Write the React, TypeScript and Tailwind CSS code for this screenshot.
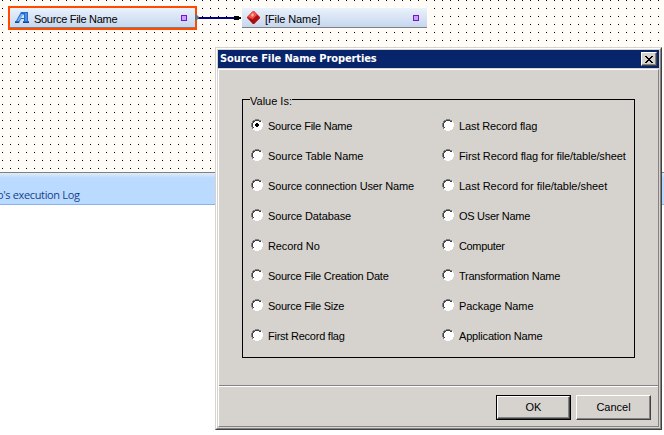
const left = [
  { label: "Source File Name", fit: "tracking-[-0.25px]" },
  { label: "Source Table Name", fit: "tracking-[-0.06px]" },
  { label: "Source connection User Name", fit: "tracking-[-0.14px]" },
  { label: "Source Database", fit: "tracking-[-0.13px]" },
  { label: "Record No", fit: "tracking-[-0.1px]" },
  { label: "Source File Creation Date", fit: "tracking-[-0.24px]" },
  { label: "Source File Size", fit: "tracking-[-0.25px]" },
  { label: "First Record flag", fit: "tracking-[-0.24px]" },
];
const right = [
  { label: "Last Record flag", fit: "tracking-[-0.12px]" },
  { label: "First Record flag for file/table/sheet", fit: "tracking-[-0.1px]" },
  { label: "Last Record for file/table/sheet", fit: "tracking-[-0.03px]" },
  { label: "OS User Name", fit: "tracking-[-0.3px]" },
  { label: "Computer", fit: "tracking-[-0.35px]" },
  { label: "Transformation Name", fit: "tracking-[-0.26px]" },
  { label: "Package Name", fit: "tracking-[-0.06px]" },
  { label: "Application Name", fit: "tracking-[-0.18px]" },
];

function Radio({ checked }: { checked: boolean }) {
  return (
    <svg width="12" height="12" className="shrink-0" shapeRendering="crispEdges">
      <path d="M4 1h4v1h2v2h1v4h-1v2H8v1H4v-1H2V8H1V4h1V2h2z" fill="#fff" />
      <path d="M4 0h4v1H4zM2 1h2v1H2zM8 1h2v1H8zM1 2h1v2H1zM0 4h1v4H0zM1 8h1v2H1z" fill="#808080" />
      <path d="M4 1h4v1H4zM2 2h2v1H2zM8 2h2v1H8zM2 3h1v1H2zM1 4h1v4H1zM2 8h1v1H2z" fill="#404040" />
      <path d="M10 2h1v2h-1zM11 4h1v4h-1zM10 8h1v2h-1zM8 10h2v1H8zM4 11h4v1H4zM2 10h2v1H2z" fill="#fff" />
      {checked && <path d="M5 4h2v1h1v2H7v1H5V7H4V5h1z" fill="#000" />}
    </svg>
  );
}

function Column({ items, selected, width }: { items: typeof left; selected: number; width: string }) {
  return (
    <div className={`flex flex-col ${width}`}>
      {items.map((item, i) => (
        <label key={item.label} className="flex h-[30px] shrink-0 items-start whitespace-nowrap">
          <Radio checked={i === selected} />
          <span className={`ml-[5px] leading-[14px] ${item.fit}`}>{item.label}</span>
        </label>
      ))}
    </div>
  );
}

function Port() {
  return <span className="block size-[6px] border border-[#7a10d8] bg-[#c9a0f4]" />;
}

function LetterIcon() {
  return (
    <svg width="14" height="12" viewBox="0 0 14 12">
      <path d="M6 0h7v9h1v2H8V9h1V7H6L4 11H0V9h1z" fill="#2869cd" />
      <path d="M6 2h3L4 9H2z" fill="#70b5f3" />
      <path d="M8 3h1v3H6z" fill="#d6eaff" />
      <path d="M10 1h2v8h-2z" fill="#4b91e4" />
      <path d="M0 10h4v1H0zM8 10h6v1H8z" fill="#153fa0" />
    </svg>
  );
}

function RubyIcon() {
  return (
    <svg width="13" height="13" viewBox="0 0 13 13">
      <path d="M6 0h1l6 6v1l-6 6H6L0 7V6z" fill="#d41c1c" />
      <path d="M6 0h1l3 4-4 4-5-2z" fill="#f05448" />
      <path d="M4 4l2-2 1 2-2 2z" fill="#ffb4a8" />
      <path d="M6 8l4-4 3 3-6 6H6z" fill="#b00e12" />
      <path d="M1 7l5 2v4z" fill="#8b1515" />
    </svg>
  );
}

export default function App() {
  return (
    <main className="relative h-[435px] w-[664px] overflow-hidden bg-white font-['Liberation_Sans',sans-serif] text-[11px] text-black">
      <section className="h-[172px] bg-[#fffcf7]">
        <svg width="664" height="172" className="block" shapeRendering="crispEdges">
          <defs>
            <pattern id="dots" width="8" height="8" patternUnits="userSpaceOnUse">
              <rect x="2" y="0" width="1" height="1" fill="#000" />
            </pattern>
          </defs>
          <rect width="664" height="172" fill="url(#dots)" />
          <rect x="197" y="17" width="39" height="2" fill="#000080" />
          <path d="M234 16h5v1h2v2h-2v1h-5z" fill="#000" />
        </svg>
      </section>
      <section className="h-[33px] border-t border-b border-t-[#808080] border-b-[#8ab2ea] bg-[#bbdaff]">
        <div className="h-[5px] bg-linear-to-b from-[#e2ebf6] to-[#bbdaff]" />
        <div className="-ml-[3px] pt-[9px] font-['Open_Sans',sans-serif] text-[11px] leading-4 tracking-[-0.35px] whitespace-nowrap text-[#15428b]">o's execution Log</div>
      </section>

      <div className="absolute top-[6px] left-[8px] flex h-6 w-[189px] border-2 border-[#ff4a00]">
        <div className="flex w-full items-center border-b border-[#808080] bg-linear-to-b from-[#eaf2fc] to-[#c6d7ee] pr-2 pl-[5px]">
          <LetterIcon />
          <span className="ml-[5px] flex-1 pt-[2px] leading-4 tracking-[-0.3px]">Source File Name</span>
          <Port />
        </div>
      </div>
      <svg width="4" height="7" className="absolute top-[14px] left-[195px]">
        <path d="M0 0h1l3 3v1L1 7H0z" fill="#707070" />
      </svg>
      <div className="absolute top-2 left-[242px] flex h-5 w-[185px] items-center border-b border-[#808080] bg-linear-to-b from-[#eaf2fc] to-[#c6d7ee] pr-2 pl-[5px]">
        <RubyIcon />
        <span className="ml-[5px] flex-1 pt-[2px] leading-4 tracking-[-0.1px]">[File Name]</span>
        <Port />
      </div>

      <div role="dialog" className="absolute top-[47px] left-[215px] h-[383px] w-[447px] border border-[#d6d3ce] border-r-[#424142] border-b-[#424142] bg-[#d6d3ce]">
        <div className="h-full border border-white border-r-[#848284] border-b-[#848284] p-px">
          <header className="flex h-[18px] items-center justify-between bg-[#08246b] pr-[2px] pl-[2px]">
            <h1 className="font-['DejaVu_Sans_Condensed','DejaVu_Sans',sans-serif] text-[11px] leading-[18px] font-bold tracking-[-0.1px] whitespace-nowrap text-white">Source File Name Properties</h1>
            <button aria-label="Close" className="flex h-[14px] w-4 items-center justify-center border border-white border-r-[#424142] border-b-[#424142] bg-[#d6d3ce] shadow-[inset_-1px_-1px_#848284]">
              <svg width="8" height="7" shapeRendering="crispEdges">
                <path d="M0 0h2v1h1v1h2V1h1V0h2v1H7v1H6v1H5v1h1v1h1v1h1v1H6V6H5V5H3v1H2v1H0V6h1V5h1V4h1V3H2V2H1V1H0z" fill="#000" />
              </svg>
            </button>
          </header>
          <div className="mt-px h-[358px] border border-white border-r-[#848284] border-b-[#848284]">
            <div className="h-[316px] border-b border-[#848284] pt-[29px] pl-[23px]">
              <fieldset className="relative flex h-[259px] w-[393px] border border-black pt-[19px] pl-2">
                <span className="absolute -top-[7px] left-[7px] bg-[#d6d3ce] leading-[16px] whitespace-nowrap">Value Is:</span>
                <Column items={left} selected={0} width="w-[191px]" />
                <Column items={right} selected={-1} width="w-[180px]" />
              </fieldset>
            </div>
            <footer className="flex h-10 justify-end gap-[5px] border-t border-white pt-2 pr-[7px]">
              <button className="h-[25px] w-[75px] border border-black">
                <span className="flex h-full items-center justify-center border border-white border-r-[#424142] border-b-[#424142] shadow-[inset_-1px_-1px_#848284]">OK</span>
              </button>
              <button className="h-[25px] w-[75px] border border-white border-r-[#424142] border-b-[#424142] shadow-[inset_-1px_-1px_#848284]">Cancel</button>
            </footer>
          </div>
        </div>
      </div>
    </main>
  );
}
